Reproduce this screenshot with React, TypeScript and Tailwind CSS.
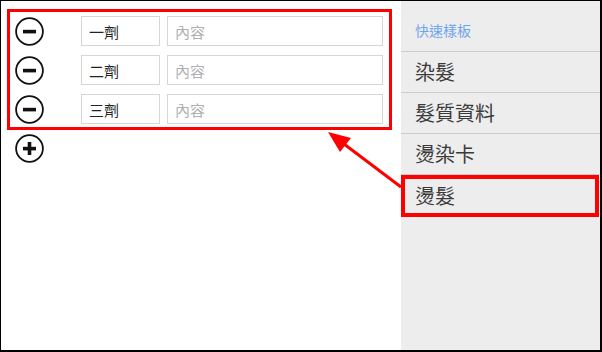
import React from "react";

const font = { fontFamily: '"Noto Sans CJK TC", "Noto Sans", sans-serif' };

const CircleIcon = ({ plus = false }: { plus?: boolean }) => (
  <svg width="29" height="29" viewBox="0 0 29 29" className="shrink-0">
    <circle cx="14.5" cy="14.5" r="13.4" fill="none" stroke="#111" strokeWidth="1.8" />
    <rect x="8" y="12.8" width="13" height="3.6" fill="#111" />
    {plus && <rect x="12.7" y="8" width="3.6" height="13" fill="#111" />}
  </svg>
);

const rows = ["一劑", "二劑", "三劑"];
const items = ["染髮", "髮質資料", "燙染卡", "燙髮"];

const App = () => {
  return (
    <div
      className="relative box-border flex h-[352px] w-[602px] border-t border-l border-r-2 border-b-2 border-black bg-white"
      style={font}
    >
      {/* left: rows */}
      <div className="flex w-[400px] flex-col gap-[9px] pl-[14px] pt-[15px]">
        {rows.map((r) => (
          <div key={r} className="flex h-[30px] items-center">
            <CircleIcon />
            <input
              defaultValue={r}
              className="ml-[37px] box-border h-[30px] w-[79px] border border-[#d6d6d6] bg-white pl-[7px] text-[15px] text-[#222] outline-none"
              style={font}
            />
            <input
              placeholder="內容"
              className="ml-[7px] box-border h-[30px] w-[216px] border border-[#d6d6d6] bg-white pl-[7px] text-[15px] text-[#222] outline-none placeholder:text-[#b0b0b0]"
              style={font}
            />
          </div>
        ))}
        <div className="flex h-[30px] items-center">
          <CircleIcon plus />
        </div>
      </div>

      {/* right: sidebar */}
      <div className="flex w-[199px] flex-col bg-[#ededed]">
        <div className="flex h-[51px] items-center border-b border-[#cccccc] pl-[14px] pt-[8px] text-[14px] text-[#6ea6ee]">
          快速樣板
        </div>
        {items.map((t, i) => (
          <div
            key={t}
            className={`flex h-[41px] items-center pl-[14px] text-[20px] text-[#3a3a3a] ${
              i < items.length - 1 ? "border-b border-[#cccccc]" : ""
            }`}
          >
            {t}
          </div>
        ))}
      </div>

      {/* annotations */}
      <div className="pointer-events-none absolute left-[6px] top-[8px] h-[121px] w-[385px] border-[3px] border-[#ff0000]" />
      <div className="pointer-events-none absolute left-[400px] top-[174px] h-[42px] w-[198px] border-[4px] border-[#ff0000]" />
      <svg
        className="pointer-events-none absolute left-[-1px] top-[-1px]"
        width="602"
        height="352"
        viewBox="0 0 602 352"
      >
        <line x1="401" y1="187" x2="344" y2="144" stroke="#ff0000" strokeWidth="3" />
        <polygon points="328,132 351,138 340,152" fill="#ff0000" />
      </svg>
    </div>
  );
};

export default App;
